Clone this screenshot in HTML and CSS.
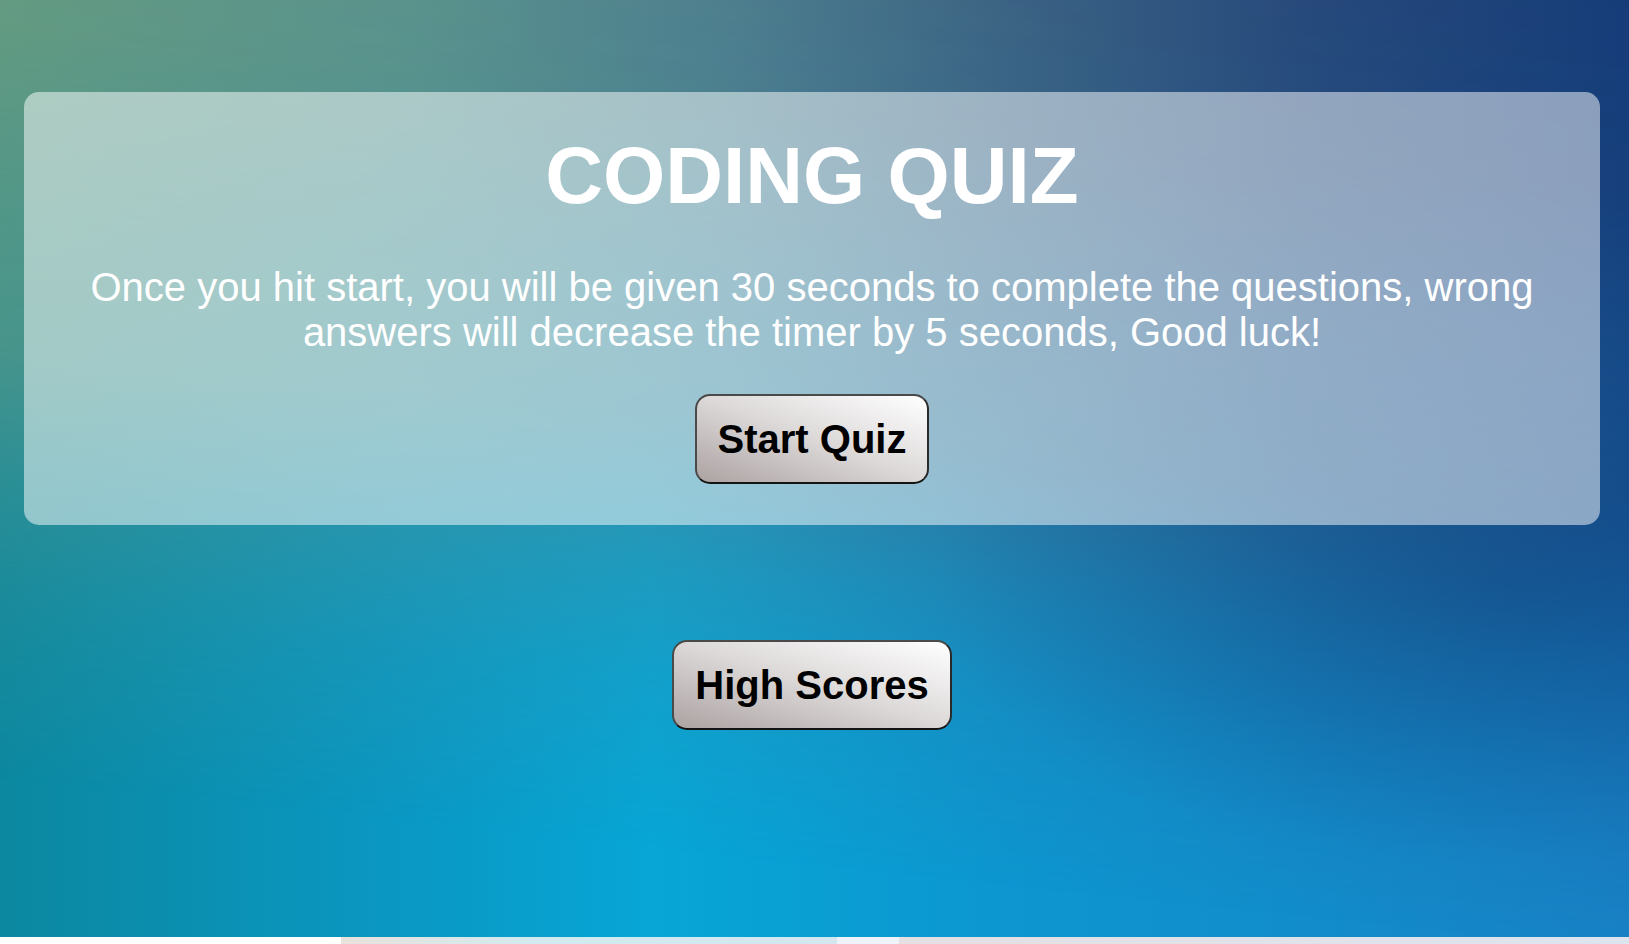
FILE: index.html
```html
<!DOCTYPE html>
<html lang="en">
<head>
<meta charset="utf-8">
<title>Coding Quiz</title>
<link rel="stylesheet" href="styles.css">
</head>
<body>
  <div class="scene">
    <main class="card">
      <h1 class="title">CODING QUIZ</h1>
      <p class="intro">Once you hit start, you will be given 30 seconds to complete the questions, wrong answers will decrease the timer by 5 seconds, Good luck!</p>
      <button class="btn" type="button">Start Quiz</button>
    </main>
    <div class="scores-row">
      <button class="btn" type="button">High Scores</button>
    </div>
  </div>
  <div class="strip">
    <span class="seg seg-a"></span>
    <span class="seg seg-b"></span>
    <span class="seg seg-c"></span>
    <span class="seg seg-d"></span>
  </div>
</body>
</html>
```

FILE: styles.css
```css
html, body {
  margin: 0;
  padding: 0;
  background: #ffffff;
  font-family: "Liberation Sans", Arial, sans-serif;
}

.scene {
  position: relative;
  height: 937px;
  overflow: hidden;
  display: flex;
  flex-direction: column;
  background:
    radial-gradient(ellipse 35% 30% at 92% 62%, rgba(6, 70, 130, 0.45) 0%, rgba(6, 70, 130, 0) 100%),
    linear-gradient(to right, #0c88a0 0%, #0a98c4 25%, #07a6d6 40%, #0d96d0 62%, #1882c6 100%);
}

.scene::before {
  content: "";
  position: absolute;
  inset: 0;
  background: linear-gradient(to right, #679b80 0%, #5d928a 25%, #4f7d8c 45%, #3c6282 62%, #27497a 80%, #163c78 100%);
  -webkit-mask-image: linear-gradient(186deg, #000 0%, rgba(0,0,0,0.95) 18%, rgba(0,0,0,0.78) 33%, rgba(0,0,0,0.65) 47%, rgba(0,0,0,0.32) 60%, rgba(0,0,0,0.15) 70%, rgba(0,0,0,0) 86%);
  mask-image: linear-gradient(186deg, #000 0%, rgba(0,0,0,0.95) 18%, rgba(0,0,0,0.78) 33%, rgba(0,0,0,0.65) 47%, rgba(0,0,0,0.32) 60%, rgba(0,0,0,0.15) 70%, rgba(0,0,0,0) 86%);
  z-index: 0;
}

.card {
  position: relative;
  z-index: 1;
  margin: 92px 29px 0 24px;
  padding: 38px 20px 41px;
  border-radius: 15px;
  background: rgba(255, 255, 255, 0.5);
  text-align: center;
  color: #ffffff;
}

.title {
  margin: 0;
  font-size: 80px;
  font-weight: 700;
  line-height: normal;
}

.intro {
  margin: 43px 0 39px;
  font-size: 40px;
  line-height: normal;
}

.btn {
  font-family: "Liberation Sans", Arial, sans-serif;
  font-size: 40px;
  font-weight: 700;
  line-height: 46px;
  color: #000000;
  padding: 20px 21px;
  border: 2px solid #4a4a4a;
  border-bottom-color: #141414;
  border-right-color: #2a2a2a;
  border-radius: 15px;
  background: linear-gradient(to top right, #aca2a2 0%, #dcd8d8 50%, #ffffff 100%);
  cursor: pointer;
}

.scores-row {
  position: relative;
  z-index: 1;
  margin: 115px 29px 0 24px;
  display: flex;
  justify-content: center;
}

.strip {
  display: flex;
  height: 7px;
}

.seg { display: block; height: 100%; }
.seg-a { width: 341px; background: #ffffff; }
.seg-b { width: 496px; background: linear-gradient(to right, #e8e2dc, #d2eaf0 40%, #d4e6ee); }
.seg-c { width: 62px; background: #eef3fa; }
.seg-d { flex: 1; background: linear-gradient(to right, #e4e0e4, #dde4ee); }
```
